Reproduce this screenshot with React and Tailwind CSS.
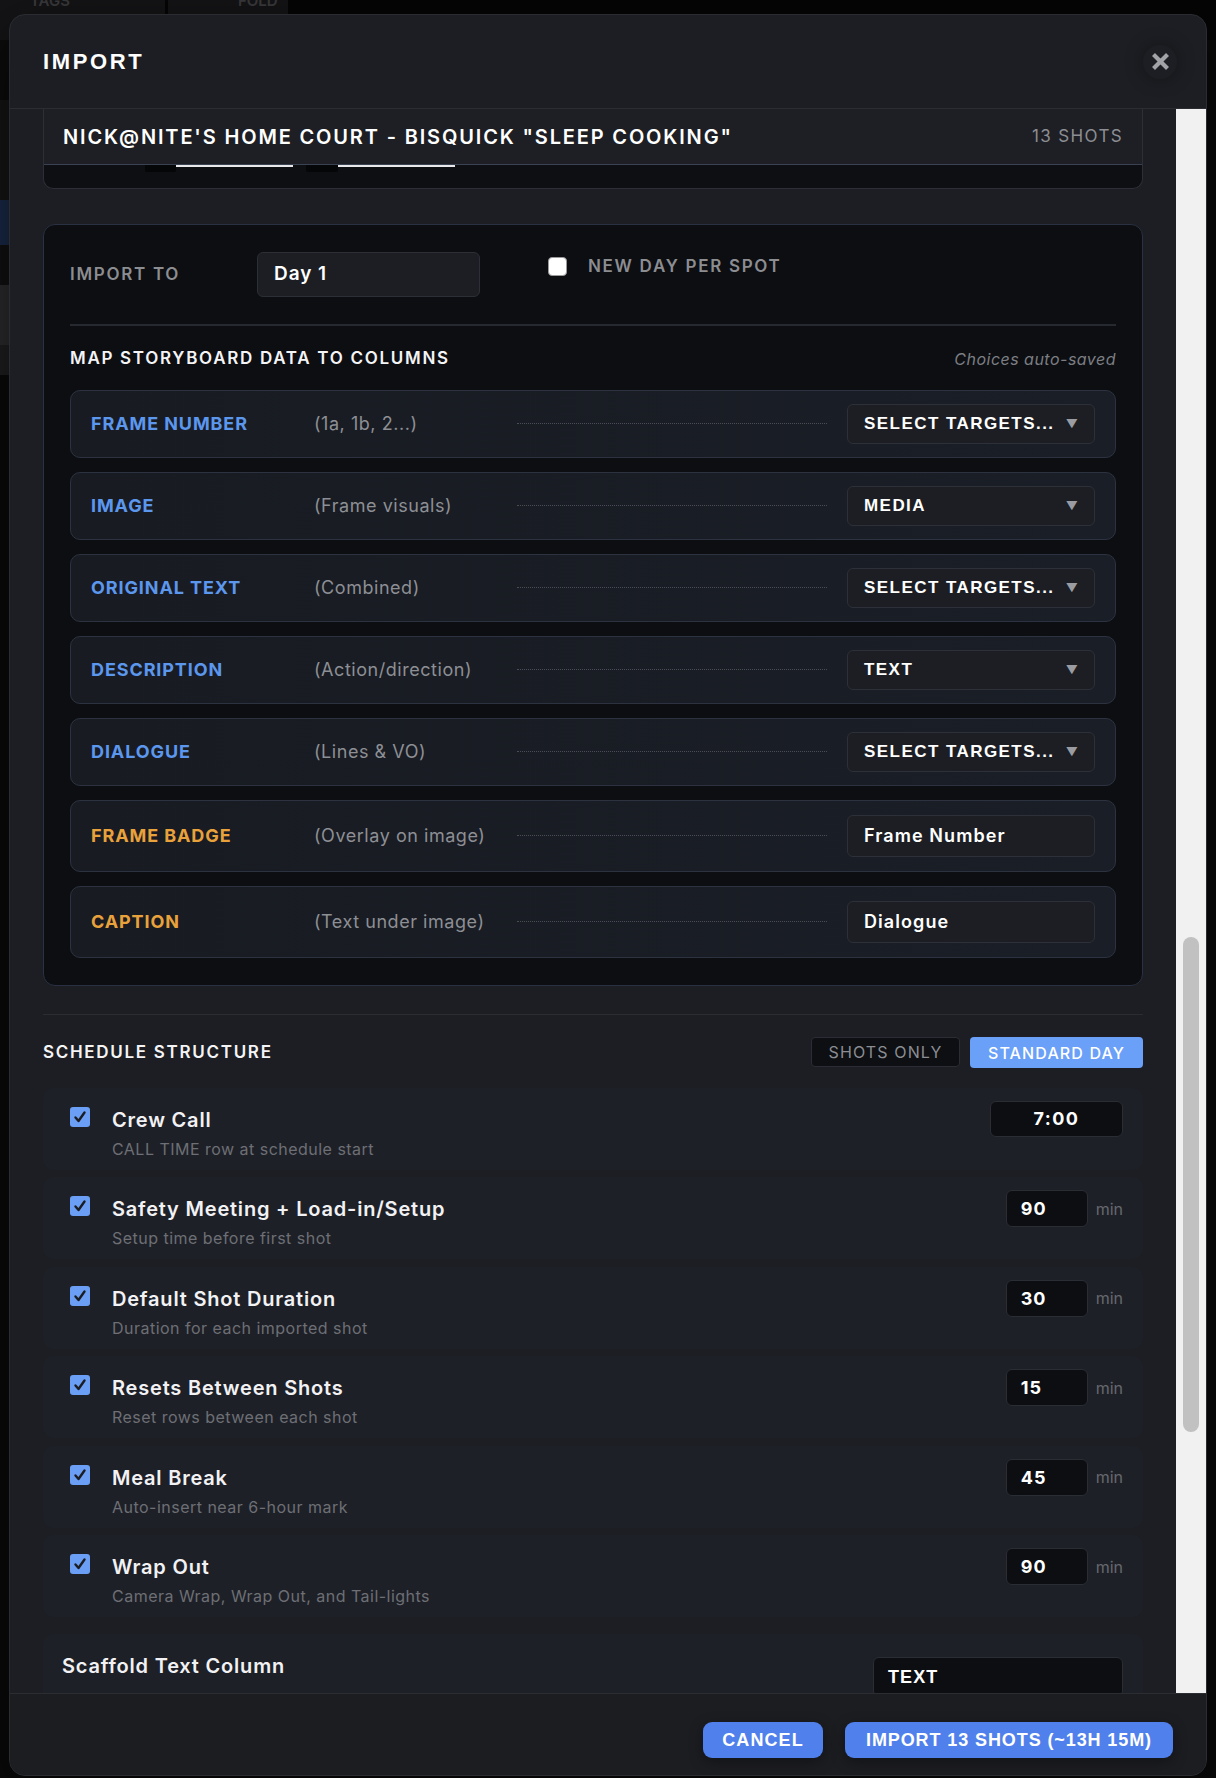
const ARIAL = "font-['Liberation_Sans',Arial,sans-serif]";

const mappings = [
  { label: 'FRAME NUMBER', hint: '(1a, 1b, 2...)', value: 'SELECT TARGETS...', kind: 'select', tone: 'blue' },
  { label: 'IMAGE', hint: '(Frame visuals)', value: 'MEDIA', kind: 'select', tone: 'blue' },
  { label: 'ORIGINAL TEXT', hint: '(Combined)', value: 'SELECT TARGETS...', kind: 'select', tone: 'blue' },
  { label: 'DESCRIPTION', hint: '(Action/direction)', value: 'TEXT', kind: 'select', tone: 'blue' },
  { label: 'DIALOGUE', hint: '(Lines & VO)', value: 'SELECT TARGETS...', kind: 'select', tone: 'blue' },
  { label: 'FRAME BADGE', hint: '(Overlay on image)', value: 'Frame Number', kind: 'field', tone: 'orange' },
  { label: 'CAPTION', hint: '(Text under image)', value: 'Dialogue', kind: 'field', tone: 'orange' },
]

const schedule = [
  { title: 'Crew Call', sub: 'CALL TIME row at schedule start', value: '7:00', time: true },
  { title: 'Safety Meeting + Load-in/Setup', sub: 'Setup time before first shot', value: '90' },
  { title: 'Default Shot Duration', sub: 'Duration for each imported shot', value: '30' },
  { title: 'Resets Between Shots', sub: 'Reset rows between each shot', value: '15' },
  { title: 'Meal Break', sub: 'Auto-insert near 6-hour mark', value: '45' },
  { title: 'Wrap Out', sub: 'Camera Wrap, Wrap Out, and Tail-lights', value: '90' },
]

function Check() {
  return (
    <div className="w-[20px] h-[20px] rounded-[3px] bg-[#6a9ff5] flex items-center justify-center shrink-0">
      <svg width="14" height="14" viewBox="0 0 14 14">
        <path d="M2.5 7.5 L5.5 11 L11.5 2.5" fill="none" stroke="#1b1d22" strokeWidth="2.4" strokeLinecap="round" strokeLinejoin="round" />
      </svg>
    </div>
  )
}

function MapRow({ label, hint, value, kind, tone }) {
  const tall = kind === 'field'
  return (
    <div className={`flex items-center rounded-[10px] border border-[#2c3240] bg-gradient-to-r from-[#181b22] to-[#1a1e26] pl-5 pr-5 ${tall ? 'py-[14px]' : 'py-[13px]'}`}>
      <span className={`w-[223px] text-[18px] font-bold tracking-[0.05em] ${tone === 'blue' ? 'text-[#5c97ee]' : 'text-[#e9a23b]'}`}>
        {label}
      </span>
      <span className="w-[203px] text-[18px] tracking-[0.03em] text-[#8d8f94]">{hint}</span>
      <div className="flex-1 border-t border-dotted border-[#4a4d55]" />
      <div className={`ml-5 w-[248px] flex items-center justify-between rounded-[6px] border border-[#2d3038] bg-[#1c1e23] pl-[16px] pr-[16px] ${tall ? 'h-[42px]' : 'h-[40px]'}`}>
        {kind === 'select' ? (
          <>
            <span className={`${ARIAL} text-[17px] font-bold tracking-[0.085em] text-white`}>{value}</span>
            <span className="text-[12px] text-[#9a9ca2]">▼</span>
          </>
        ) : (
          <span className="text-[18px] font-semibold tracking-[0.06em] text-white">{value}</span>
        )}
      </div>
    </div>
  )
}

function ScheduleRow({ title, sub, value, time }) {
  return (
    <div className="h-[82px] rounded-[10px] bg-[#1e2028] flex items-start pl-[27px] pr-[20px] pt-[19px]">
      <Check />
      <div className="ml-[22px] flex-1">
        <div className="text-[20px] font-semibold tracking-[0.04em] text-[#f2f2f4] leading-[24px] mt-[1px]">{title}</div>
        <div className="mt-[5px] text-[16px] tracking-[0.03em] text-[#6d6f74]">{sub}</div>
      </div>
      {time ? (
        <div className="-mt-[6px] w-[133px] h-[36px] rounded-[6px] border border-[#2a2d34] bg-[#0c0e12] flex items-center justify-center text-[18px] font-bold tracking-[0.08em] text-white">
          {value}
        </div>
      ) : (
        <div className="-mt-[6px] flex items-center">
          <div className="w-[82px] h-[37px] rounded-[6px] border border-[#2a2d34] bg-[#0c0e12] flex items-center pl-[14px] text-[18px] font-bold tracking-[0.06em] text-white">
            {value}
          </div>
          <span className="ml-[8px] text-[16px] text-[#66686d]">min</span>
        </div>
      )}
    </div>
  )
}

export default function App() {
  return (
    <div className="relative h-[1778px] w-[1216px] overflow-hidden bg-[#0a0a0b] font-['Inter',sans-serif]">
      {/* page behind the modal */}
      <div className="flex h-[40px] gap-[3px] bg-[#050505]">
        <div className="w-[165px] bg-[#141416] text-[#3a3a3c] text-[15px] font-semibold pl-[30px] -mt-[10px]">TAGS</div>
        <div className="w-[120px] bg-[#141416] text-[#3a3a3c] text-[15px] font-semibold pl-[70px] -mt-[10px]">FOLD</div>
      </div>
      <div className="flex flex-col w-[9px]">
        <div className="h-[60px] bg-[#0c0c0d]" />
        <div className="h-[100px] bg-[#151516]" />
        <div className="h-[45px] bg-[#1a2a48]" />
        <div className="h-[40px] bg-[#111113]" />
        <div className="h-[60px] bg-[#2c2c2e]" />
        <div className="h-[30px] bg-[#1f1f21]" />
      </div>

      <div className="absolute left-[9px] top-[14px] w-[1198px] h-[1762px] rounded-[16px] border border-[#2a2c31] bg-[#1d1e23] flex flex-col overflow-hidden shadow-[0_20px_60px_rgba(0,0,0,0.6)]">
        {/* header */}
        <div className="h-[94px] shrink-0 flex items-center justify-between pl-[33px] pr-[29px] border-b border-[#2b2d33]">
          <span className={`${ARIAL} text-[22px] font-bold tracking-[0.12em] text-white`}>IMPORT</span>
          <div className="w-[34px] h-[34px] rounded-full flex items-center justify-center shadow-[0_0_18px_rgba(0,0,0,0.35)]">
            <svg width="19" height="19" viewBox="0 0 19 19">
              <path d="M2.5 2.5 L16.5 16.5 M16.5 2.5 L2.5 16.5" stroke="#a2a3a7" strokeWidth="4.2" />
            </svg>
          </div>
        </div>

        {/* scroll area */}
        <div className="h-[1584px] shrink-0 flex">
          <div className="flex-1 overflow-hidden px-[33px]">
            {/* spot card */}
            <div className="rounded-b-[10px] border-x border-b border-[#2c2f37] bg-[#0d0f13]">
              <div className="h-[56px] flex items-center justify-between bg-[#1d1f24] border-b border-[#3a4152] pl-[19px] pr-[19px]">
                <span className="text-[20px] font-semibold tracking-[0.092em] text-white">
                  NICK@NITE'S HOME COURT - BISQUICK "SLEEP COOKING"
                </span>
                <span className="text-[17px] tracking-[0.08em] text-[#8c8e93]">13 SHOTS</span>
              </div>
              <div className="h-[23px] flex items-start pl-[101px]">
                <div className="w-[31px] h-[7px] bg-[#050607] rounded-b-[2px]" />
                <div className="w-[117px] h-[2px] bg-[#e8e8ea]" />
                <div className="ml-[13px] w-[32px] h-[7px] bg-[#050607] rounded-b-[2px]" />
                <div className="w-[117px] h-[2px] bg-[#e8e8ea]" />
              </div>
            </div>

            {/* settings card */}
            <div className="mt-[35px] rounded-[12px] border border-[#2a3142] bg-[#0c0e12] px-[26px] pt-[27px] pb-[27px]">
              <div className="flex items-start">
                <div className="w-[187px] h-[45px] flex items-center text-[17px] font-semibold tracking-[0.1em] text-[#8c8d91]">
                  IMPORT TO
                </div>
                <div className="w-[223px] h-[45px] rounded-[6px] border border-[#2c2f36] bg-[#1c1e23] flex items-center pl-[16px] text-[19px] font-semibold tracking-[0.05em] text-white">
                  Day 1
                </div>
                <div className="ml-[68px] mt-[2px] flex items-center">
                  <div className="w-[19px] h-[19px] rounded-[4px] bg-white border border-[#9a9a9a]" />
                  <span className="ml-[21px] text-[17px] font-semibold tracking-[0.1em] text-[#8c8d91]">NEW DAY PER SPOT</span>
                </div>
              </div>

              <div className="mt-[27px] h-[2px] bg-[#26292f]" />

              <div className="mt-[20px] flex items-center justify-between">
                <span className="text-[17px] font-semibold tracking-[0.1em] text-[#f4f4f6]">MAP STORYBOARD DATA TO COLUMNS</span>
                <span className="text-[16px] italic tracking-[0.03em] text-[#7c7e83]">Choices auto-saved</span>
              </div>

              <div className="mt-[18px] flex flex-col gap-[14px]">
                {mappings.map((m) => (
                  <MapRow key={m.label} {...m} />
                ))}
              </div>
            </div>

            <div className="mt-[28px] h-px bg-[#2a2c32]" />

            {/* schedule structure */}
            <div className="mt-[23px] h-[30px] flex items-center justify-between">
              <span className="text-[17px] font-semibold tracking-[0.1em] text-[#f4f4f6]">SCHEDULE STRUCTURE</span>
              <div className="flex gap-[10px]">
                <div className="w-[149px] h-[30px] rounded-[4px] border border-[#2a2d34] bg-[#0d0f13] flex items-center justify-center text-[16px] tracking-[0.07em] text-[#8b8d92]">
                  SHOTS ONLY
                </div>
                <div className="w-[173px] h-[31px] rounded-[4px] bg-[#6aa0f8] flex items-center justify-center text-[16px] font-medium tracking-[0.07em] text-white">
                  STANDARD DAY
                </div>
              </div>
            </div>

            <div className="mt-[20px] flex flex-col gap-[7.6px]">
              {schedule.map((s) => (
                <ScheduleRow key={s.title} {...s} />
              ))}
            </div>

            <div className="mt-[17px] h-[120px] rounded-[10px] bg-[#1e2028] flex items-start justify-between pl-[19px] pr-[20px] pt-[17px]">
              <div>
                <div className="text-[20px] font-semibold tracking-[0.04em] text-[#f2f2f4]">Scaffold Text Column</div>
                <div className="mt-[6px] text-[16px] tracking-[0.03em] text-[#6d6f74]">Where setup, reset, meal, wrap labels go</div>
              </div>
              <div className="mt-[6px] w-[250px] h-[40px] rounded-[6px] border border-[#2a2d34] bg-[#0c0e12] flex items-center pl-[14px]">
                <span className={`${ARIAL} text-[18px] font-bold tracking-[0.06em] text-white`}>TEXT</span>
              </div>
            </div>
          </div>

          {/* scrollbar */}
          <div className="w-[30px] shrink-0 bg-[#f1f1f1] pt-[828px] pl-[7px]">
            <div className="w-[16px] h-[495px] rounded-full bg-[#c1c1c1]" />
          </div>
        </div>

        {/* footer */}
        <div className="flex-1 border-t border-[#2b2d33] bg-[#1c1d21] flex items-start justify-end gap-[22px] pt-[28px] pr-[33px]">
          <button className={`${ARIAL} h-[36px] w-[120px] rounded-[9px] bg-[#5080ec] text-[18px] font-bold tracking-[0.06em] text-white shadow-[0_4px_14px_rgba(0,0,0,0.35)]`}>
            CANCEL
          </button>
          <button className={`${ARIAL} h-[36px] w-[328px] rounded-[9px] bg-[#5080ec] text-[18px] font-bold tracking-[0.05em] text-white shadow-[0_4px_14px_rgba(0,0,0,0.35)]`}>
            IMPORT 13 SHOTS (~13H 15M)
          </button>
        </div>
      </div>
    </div>
  )
}
